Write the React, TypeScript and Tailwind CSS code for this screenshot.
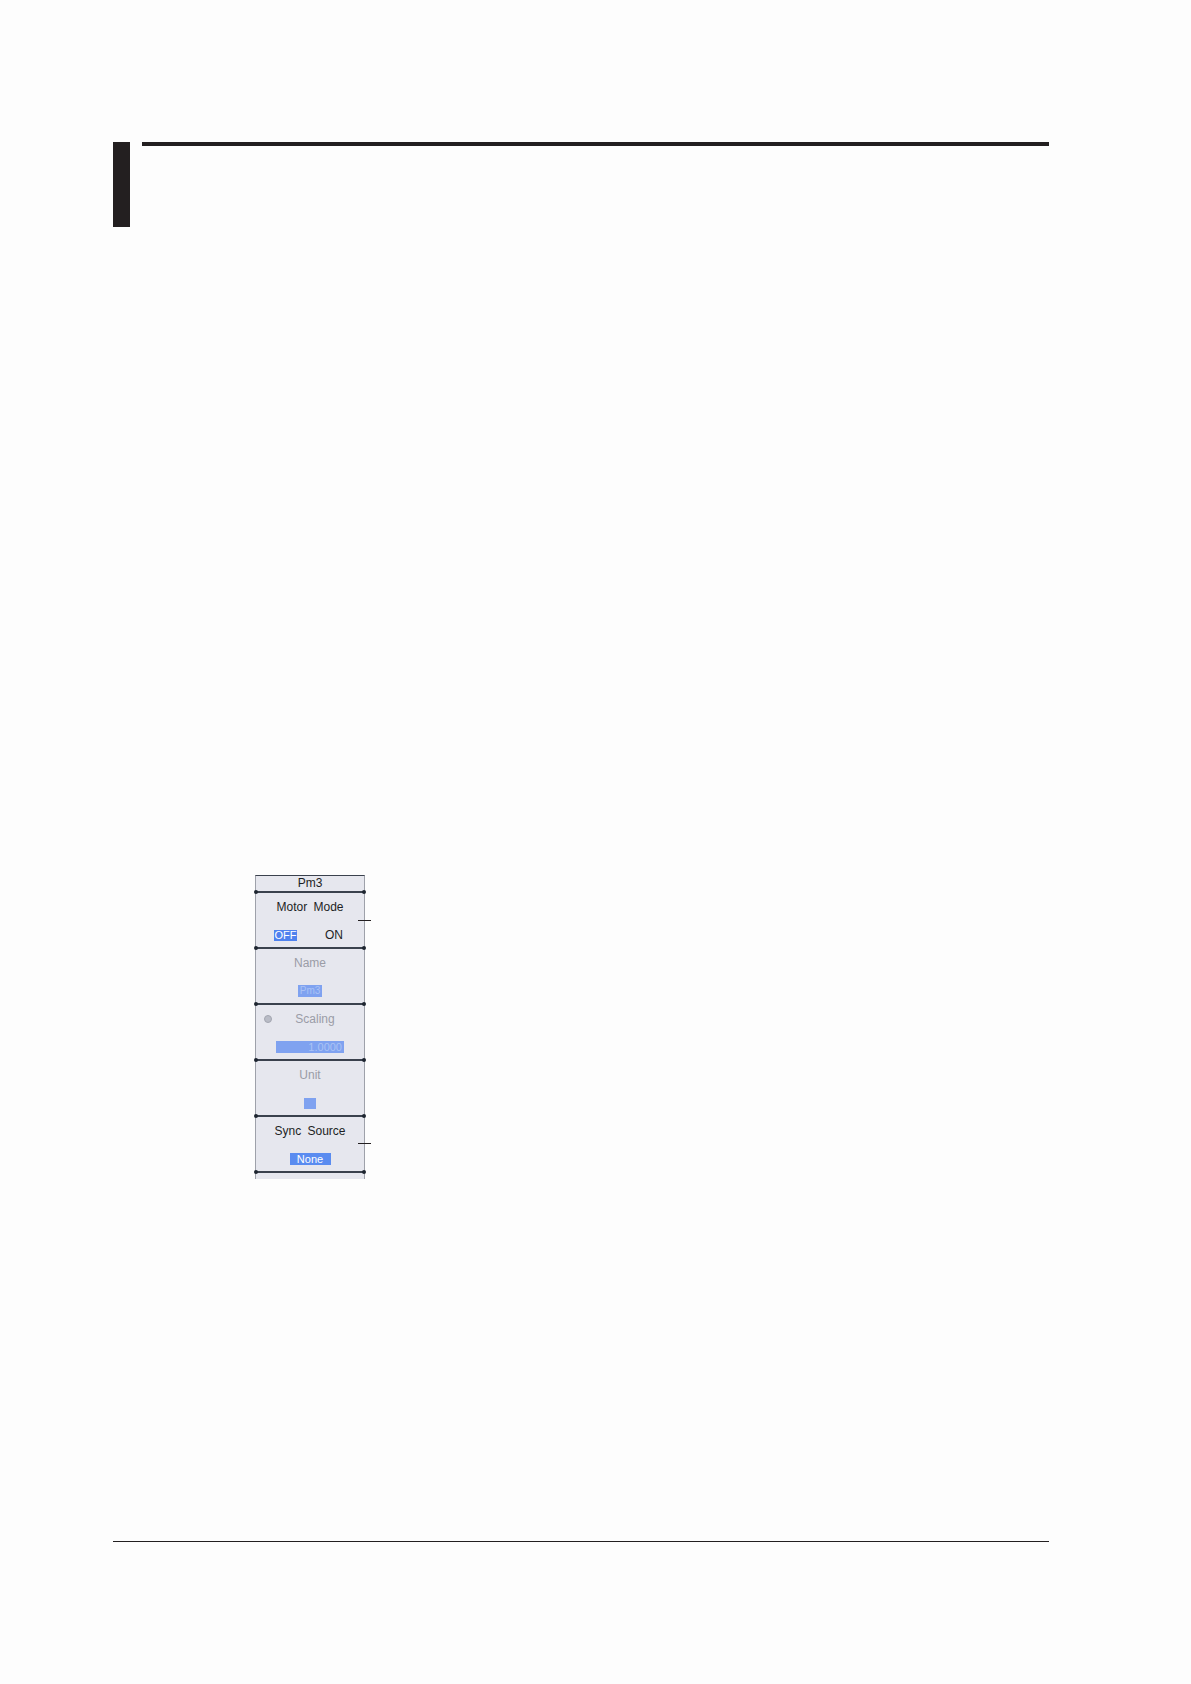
import React from "react";

const font = { fontFamily: '"Liberation Sans", Arial, sans-serif' };

function Divider() {
  return (
    <div className="relative h-[2px] bg-[#3a414d] -mx-[1px]">
      <div className="absolute -left-[1px] -top-[1px] w-[4px] h-[4px] rounded-full bg-[#1e2530]" />
      <div className="absolute -right-[1px] -top-[1px] w-[4px] h-[4px] rounded-full bg-[#1e2530]" />
    </div>
  );
}

function Section({
  title,
  disabled,
  icon,
  children,
}: {
  title: string;
  disabled?: boolean;
  icon?: boolean;
  children: React.ReactNode;
}) {
  return (
    <div className="h-[54px] flex flex-col">
      <div
        className={`relative h-[16px] mt-[6px] text-[12px] leading-[16px] text-center [word-spacing:3px] ${
          disabled ? "text-[#9a9ca6]" : "text-[#1d1f24]"
        }`}
      >
        {icon && (
          <span className="absolute left-[8px] top-[4px] w-[8px] h-[8px] rounded-full bg-[#b9bcc6] border border-[#a3a6b0]" />
        )}
        <span className={icon ? "pl-[10px]" : ""}>{title}</span>
      </div>
      <div className="mt-[14px] h-[12px] flex items-center">{children}</div>
    </div>
  );
}

export default function App() {
  return (
    <div className="w-[1191px] h-[1684px] bg-[#fdfdfd] overflow-hidden" style={font}>
      {/* heading rule */}
      <div className="pt-[142px] pl-[113px] pr-[142px] flex items-start">
        <div className="w-[17px] h-[85px] bg-[#231f20]" />
        <div className="ml-[12px] flex-1 h-[4px] bg-[#231f20]" />
      </div>

      {/* panel */}
      <div className="mt-[648px] ml-[255px] relative w-[110px]">
        <div className="w-[110px] bg-[#e6e7ee] border-x border-[#9ea1aa] border-t border-t-[#3a414d]">
          <div className="h-[15px] text-[12px] leading-[15px] text-center text-[#1d1f24]">Pm3</div>
          <Divider />
          <Section title="Motor Mode">
            <div className="pl-[18px] flex items-center text-[12px] leading-[11px]">
              <span className="w-[23px] h-[11px] bg-[#4f82ee] text-white text-center text-[11px]">OFF</span>
              <span className="ml-[28px] text-[#1d1f24]">ON</span>
            </div>
          </Section>
          <Divider />
          <Section title="Name" disabled>
            <div className="w-full flex justify-center">
              <span className="w-[24px] h-[12px] bg-[#7fa2f0] text-[#aac2f5] text-[10px] leading-[12px] text-center">
                Pm3
              </span>
            </div>
          </Section>
          <Divider />
          <Section title="Scaling" disabled icon>
            <div className="w-full flex justify-center">
              <span className="w-[68px] h-[12px] bg-[#7fa2f0] text-[#aac2f5] text-[11px] leading-[12px] text-right pr-[2px]">
                1.0000
              </span>
            </div>
          </Section>
          <Divider />
          <Section title="Unit" disabled>
            <div className="w-full flex justify-center">
              <span className="w-[12px] h-[11px] bg-[#7fa2f0]" />
            </div>
          </Section>
          <Divider />
          <Section title="Sync Source">
            <div className="w-full flex justify-center">
              <span className="w-[41px] h-[12px] bg-[#5a8cf0] text-white text-[11px] leading-[12px] text-center">
                None
              </span>
            </div>
          </Section>
          <Divider />
          <div className="h-[6px]" />
        </div>
        <div className="absolute left-[103px] top-[45px] w-[13px] h-[1px] bg-[#231f20]" />
        <div className="absolute left-[103px] top-[268px] w-[13px] h-[1px] bg-[#231f20]" />
      </div>

      {/* footer rule */}
      <div className="mt-[362px] ml-[113px] w-[936px] h-[1px] bg-[#231f20]" />
    </div>
  );
}
